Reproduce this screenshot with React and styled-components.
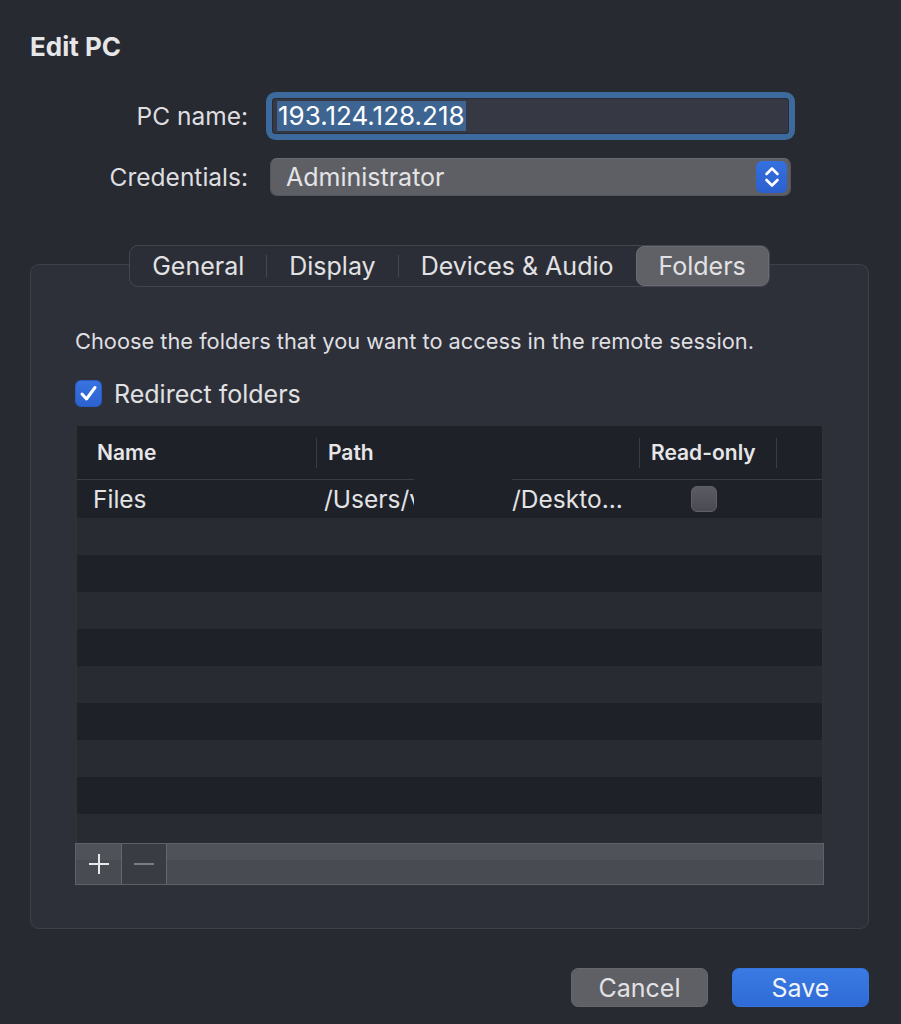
import React from 'react';
import styled, { createGlobalStyle } from 'styled-components';

const GlobalStyle = createGlobalStyle`
  html, body {
    margin: 0;
    padding: 0;
    background: #282a32;
  }
  body {
    font-family: Inter, "Noto Sans", "Liberation Sans", sans-serif;
    color: #e1e1e3;
  }
`;

const Window = styled.div`
  width: 901px;
  height: 1024px;
  box-sizing: border-box;
  padding: 30px 32px 0 30px;
  background: #282a32;
  display: flex;
  flex-direction: column;
  overflow: hidden;
`;

const Title = styled.h1`
  margin: 0;
  height: 34px;
  line-height: 34px;
  font-size: 26px;
  font-weight: 700;
  color: #e6e6e8;
`;

const Form = styled.div`
  margin-top: 28px;
  display: grid;
  grid-template-columns: 218px 521px;
  grid-template-rows: 48px 38px;
  column-gap: 22px;
  row-gap: 18px;
  align-items: center;
`;

const Label = styled.label`
  text-align: right;
  font-size: 24.5px;
  color: #dedee0;
`;

const FieldRing = styled.div`
  margin: 0 2px;
  height: 36px;
  border-radius: 4px;
  background: #363843;
  box-shadow: 0 0 0 1px #2a2c35 inset, 0 0 0 6px #3c6a9c;
  display: flex;
  align-items: center;
  padding-left: 5px;
`;

const Selected = styled.span`
  background: #3e6592;
  color: #ffffff;
  font-size: 26px;
  line-height: 30px;
  padding: 0 1px;
`;

const Popup = styled.div`
  height: 38px;
  box-sizing: border-box;
  border-radius: 7px;
  background: #5e5f65;
  border: 1px solid #54555b;
  border-top-color: #6a6b70;
  display: flex;
  align-items: center;
  justify-content: space-between;
  padding: 0 3px 0 15px;
  font-size: 25px;
  color: #e4e4e6;
`;

const Stepper = styled.div`
  width: 31px;
  height: 32px;
  border-radius: 6px;
  background: linear-gradient(#3570de, #2b5fcf);
  display: flex;
  align-items: center;
  justify-content: center;
`;

const TabSection = styled.div`
  margin-top: 49px;
  display: flex;
  flex-direction: column;
  align-items: center;
`;

const TabBar = styled.div`
  position: relative;
  z-index: 1;
  height: 42px;
  box-sizing: border-box;
  display: flex;
  align-items: center;
  border: 1px solid #44464f;
  border-radius: 9px;
  background: #2c2e37;
`;

const Tab = styled.div`
  height: 40px;
  box-sizing: border-box;
  display: flex;
  align-items: center;
  padding: 0 22px;
  font-size: 25px;
  color: #e2e2e4;
  border-radius: 8px;
  background: ${p => (p.$active ? '#606167' : 'transparent')};
  border: ${p => (p.$active ? '1px solid #6b6c71' : 'none')};
`;

const TabDivider = styled.div`
  width: 1px;
  height: 22px;
  background: #464851;
`;

const Panel = styled.div`
  align-self: stretch;
  margin-top: -23px;
  padding: 63px 44px 43px 44px;
  border: 1px solid #3f414a;
  border-radius: 9px;
  background: #2e3039;
  display: flex;
  flex-direction: column;
`;

const Description = styled.p`
  margin: 0;
  height: 26px;
  line-height: 26px;
  font-size: 21.8px;
  color: #dfdfe1;
  white-space: nowrap;
`;

const CheckRow = styled.div`
  margin-top: 26px;
  height: 27px;
  display: flex;
  align-items: center;
  gap: 12px;
  font-size: 25px;
  color: #e1e1e3;
`;

const CheckBox = styled.div`
  width: 27px;
  height: 27px;
  box-sizing: border-box;
  border-radius: 6px;
  background: ${p => (p.$checked ? 'linear-gradient(#3873e0, #2c62d0)' : 'linear-gradient(#5c5d64, #4a4b52)')};
  border: 1px solid ${p => (p.$checked ? '#2a5cc4' : '#5e5f65')};
  display: flex;
  align-items: center;
  justify-content: center;
`;

const Table = styled.div`
  margin-top: 19px;
  display: flex;
  flex-direction: column;
`;

const TableBody = styled.div`
  height: 417px;
  margin: 0 1px;
  border-left: 1px solid #33322e;
  border-right: 1px solid #33322e;
  display: flex;
  flex-direction: column;
  overflow: hidden;
  background: #1f2129;
`;

const HeaderRow = styled.div`
  height: 53px;
  flex-shrink: 0;
  display: grid;
  grid-template-columns: 240px 323px 137px 1fr;
  align-items: center;
  background: #1f2129;
`;

const HeaderCell = styled.div`
  display: flex;
  align-items: center;
  height: 30px;
  padding-left: ${p => p.$pad || '11px'};
  font-size: 21px;
  font-weight: 600;
  color: #e6e6e8;
  border-right: ${p => (p.$divider ? '1px solid #3a3c44' : 'none')};
`;

const HeaderRule = styled.div`
  flex-shrink: 0;
  height: 1px;
  display: flex;
  gap: 98px;
  &::before,
  &::after {
    content: '';
    background: #3b3d45;
  }
  &::before {
    width: 337px;
  }
  &::after {
    flex: 1;
  }
`;

const Row = styled.div`
  flex-shrink: 0;
  height: ${p => (p.$first ? '38px' : '37px')};
  display: grid;
  grid-template-columns: 240px 323px 137px 1fr;
  align-items: center;
  background: ${p => (p.$odd ? '#292b33' : '#1f2129')};
  font-size: 24.5px;
  color: #e3e3e5;
`;

const Cell = styled.div`
  display: flex;
  align-items: center;
  white-space: nowrap;
  padding-left: ${p => p.$pad || '0'};
`;

const Clip = styled.span`
  width: 90px;
  flex-shrink: 0;
  overflow: hidden;
  white-space: nowrap;
  margin-right: 98px;
`;

const SmallBox = styled.div`
  width: 26px;
  height: 26px;
  margin-left: 51px;
  box-sizing: border-box;
  border-radius: 6px;
  background: linear-gradient(#5b5c63, #4a4b52);
  border: 1px solid #606168;
`;

const Footer = styled.div`
  height: 42px;
  box-sizing: border-box;
  display: flex;
  border: 1px solid #606168;
  background: linear-gradient(#50525a 0%, #50525a 40%, #494b53 40%, #494b53 100%);
`;

const FooterButton = styled.div`
  width: ${p => p.$w};
  box-sizing: border-box;
  display: flex;
  align-items: center;
  justify-content: center;
  border-right: 1px solid #66686e;
  background: ${p => (p.$disabled ? '#3a3c44' : 'transparent')};
`;

const Actions = styled.div`
  margin-top: 39px;
  display: flex;
  justify-content: flex-end;
  gap: 24px;
`;

const Button = styled.div`
  width: 137px;
  height: 39px;
  box-sizing: border-box;
  border-radius: 7px;
  display: flex;
  align-items: center;
  justify-content: center;
  font-size: 25px;
  color: ${p => (p.$primary ? '#f2f4f8' : '#e2e2e4')};
  background: ${p => (p.$primary ? 'linear-gradient(#3a7ae3, #2f6bd6)' : '#5f6066')};
  border: 1px solid ${p => (p.$primary ? '#3574dc' : '#66676c')};
`;

const Chevrons = () => (
  <svg width="16" height="22" viewBox="0 0 16 22" fill="none">
    <path d="M2.5 8 L8 2.5 L13.5 8" stroke="#fff" strokeWidth="2.6" strokeLinecap="round" strokeLinejoin="round" />
    <path d="M2.5 14 L8 19.5 L13.5 14" stroke="#fff" strokeWidth="2.6" strokeLinecap="round" strokeLinejoin="round" />
  </svg>
);

const Check = () => (
  <svg width="19" height="17" viewBox="0 0 19 17" fill="none">
    <path d="M3 9 L7.5 14 L16 2.5" stroke="#fff" strokeWidth="3" strokeLinecap="round" strokeLinejoin="round" />
  </svg>
);

const Plus = () => (
  <svg width="22" height="22" viewBox="0 0 22 22">
    <path d="M11 1 V21 M1 11 H21" stroke="#e8e8ea" strokeWidth="2" />
  </svg>
);

const Minus = () => (
  <svg width="22" height="22" viewBox="0 0 22 22">
    <path d="M1 11 H21" stroke="#7a7c82" strokeWidth="2" />
  </svg>
);

const tabs = ['General', 'Display', 'Devices & Audio', 'Folders'];
const emptyRows = Array.from({ length: 9 }, (_, i) => i + 1);

export default function App() {
  return (
    <Window>
      <GlobalStyle />
      <Title>Edit PC</Title>
      <Form>
        <Label>PC name:</Label>
        <FieldRing>
          <Selected>193.124.128.218</Selected>
        </FieldRing>
        <Label>Credentials:</Label>
        <Popup>
          <span>Administrator</span>
          <Stepper>
            <Chevrons />
          </Stepper>
        </Popup>
      </Form>

      <TabSection>
        <TabBar>
          {tabs.map((t, i) => (
            <React.Fragment key={t}>
              {i > 0 && i < 3 && <TabDivider />}
              <Tab $active={t === 'Folders'}>{t}</Tab>
            </React.Fragment>
          ))}
        </TabBar>
        <Panel>
          <Description>Choose the folders that you want to access in the remote session.</Description>
          <CheckRow>
            <CheckBox $checked>
              <Check />
            </CheckBox>
            Redirect folders
          </CheckRow>
          <Table>
            <TableBody>
              <HeaderRow>
                <HeaderCell $pad="20px" $divider>Name</HeaderCell>
                <HeaderCell $divider>Path</HeaderCell>
                <HeaderCell $divider>Read-only</HeaderCell>
                <HeaderCell />
              </HeaderRow>
              <HeaderRule />
              <Row $first>
                <Cell $pad="16px">Files</Cell>
                <Cell $pad="7px">
                  <Clip>/Users/v</Clip>
                  <span>/Deskto...</span>
                </Cell>
                <Cell>
                  <SmallBox />
                </Cell>
                <Cell />
              </Row>
              {emptyRows.map(i => (
                <Row key={i} $odd={i % 2 === 1}>
                  <Cell />
                </Row>
              ))}
            </TableBody>
            <Footer>
              <FooterButton $w="46px">
                <Plus />
              </FooterButton>
              <FooterButton $w="45px" $disabled>
                <Minus />
              </FooterButton>
            </Footer>
          </Table>
        </Panel>
      </TabSection>

      <Actions>
        <Button>Cancel</Button>
        <Button $primary>Save</Button>
      </Actions>
    </Window>
  );
}
